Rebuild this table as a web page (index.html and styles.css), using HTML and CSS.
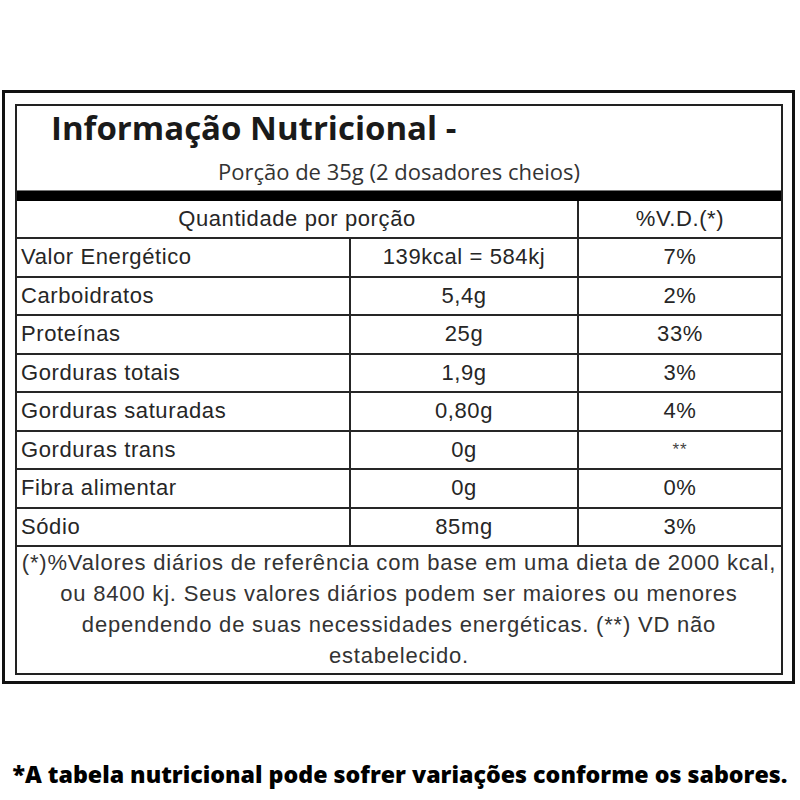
FILE: index.html
```html
<!DOCTYPE html>
<html lang="pt-BR">
<head>
<meta charset="utf-8">
<title>Informação Nutricional</title>
<link rel="stylesheet" href="styles.css">
</head>
<body>
<div class="outer">
  <div class="inner">
    <div class="head">
      <div class="title">Informação Nutricional -</div>
      <div class="sub">Porção de 35g (2 dosadores cheios)</div>
    </div>
    <div class="bar"></div>
    <div class="grid">
      <div class="cell hd span2">Quantidade por porção</div>
      <div class="cell hd c3">%V.D.(*)</div>

      <div class="cell c1">Valor Energético</div>
      <div class="cell c2">139kcal = 584kj</div>
      <div class="cell c3">7%</div>

      <div class="cell c1">Carboidratos</div>
      <div class="cell c2">5,4g</div>
      <div class="cell c3">2%</div>

      <div class="cell c1">Proteínas</div>
      <div class="cell c2">25g</div>
      <div class="cell c3">33%</div>

      <div class="cell c1">Gorduras totais</div>
      <div class="cell c2">1,9g</div>
      <div class="cell c3">3%</div>

      <div class="cell c1">Gorduras saturadas</div>
      <div class="cell c2">0,80g</div>
      <div class="cell c3">4%</div>

      <div class="cell c1">Gorduras trans</div>
      <div class="cell c2">0g</div>
      <div class="cell c3"><span class="stars">**</span></div>

      <div class="cell c1">Fibra alimentar</div>
      <div class="cell c2">0g</div>
      <div class="cell c3">0%</div>

      <div class="cell c1">Sódio</div>
      <div class="cell c2">85mg</div>
      <div class="cell c3">3%</div>
    </div>
    <div class="foot">
      <span class="ln">(*)%Valores diários de referência com base em uma dieta de 2000 kcal,</span>
      <span class="ln">ou 8400 kj. Seus valores diários podem ser maiores ou menores</span>
      <span class="ln">dependendo de suas necessidades energéticas. (**) VD não</span>
      <span class="ln">estabelecido.</span>
    </div>
  </div>
</div>
<p class="note">*A tabela nutricional pode sofrer variações conforme os sabores.</p>
</body>
</html>
```
FILE: styles.css
```css
* { box-sizing: border-box; }
html, body { margin: 0; padding: 0; background: #fff; }
body { width: 800px; height: 800px; overflow: hidden; }

.outer {
  margin: 90px 0 0 2px;
  width: 793px;
  border: 3px solid #111;
  padding: 11px 9px 6px 10px;
}
.inner {
  border: 2px solid #222;
}
.head {
  padding: 2px 0 6px 0;
}
.title {
  font-family: "Open Sans", "DejaVu Sans", sans-serif;
  font-weight: 700;
  font-size: 33px;
  line-height: 40px;
  color: #1a1a1a;
  padding-left: 34px;
}
.sub {
  margin-top: 10px;
  font-family: "Open Sans", "DejaVu Sans", sans-serif;
  font-size: 22px;
  line-height: 26px;
  color: #333;
  text-align: center;
}
.bar {
  height: 11px;
  background: #000;
  border-top: 1px solid #777;
}
.grid {
  display: grid;
  grid-template-columns: 332px 228px 204px;
  grid-template-rows: 38px repeat(8, 38.5px);
  font-family: "Liberation Sans", Arial, sans-serif;
  font-size: 22px;
  letter-spacing: 0.6px;
  color: #262626;
}
.cell {
  border-bottom: 2px solid #262626;
  display: flex;
  align-items: center;
  justify-content: center;
  white-space: nowrap;
}
.span2 { grid-column: span 2; }
.c1 { justify-content: flex-start; padding-left: 4px; }
.c2, .c3 { border-left: 2px solid #262626; }
.hd { font-size: 22px; }
.stars { font-size: 17px; color: #444; letter-spacing: 1px; }
.foot {
  padding: 0 0 2px 0;
  font-family: "Liberation Sans", Arial, sans-serif;
  font-size: 22px;
  letter-spacing: 0.8px;
  line-height: 31px;
  color: #333;
  text-align: center;
}
.ln { display: block; white-space: nowrap; }
.note {
  margin: 75px 0 0 0;
  font-family: "Open Sans", "DejaVu Sans", sans-serif;
  font-weight: 800;
  font-size: 23.2px;
  line-height: 30px;
  color: #000;
  text-align: center;
  white-space: nowrap;
}
```
